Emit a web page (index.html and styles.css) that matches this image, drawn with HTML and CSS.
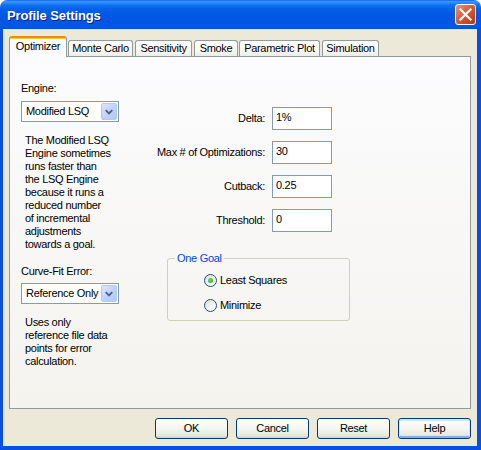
FILE: index.html
```html
<!DOCTYPE html>
<html>
<head>
<meta charset="utf-8">
<link rel="stylesheet" href="styles.css">
</head>
<body>
<div class="window">
  <div class="titlebar">
    <span class="title">Profile Settings</span>
    <span class="close"><svg width="19" height="19" viewBox="0 0 19 19"><path d="M4.5 4.5 L14.5 14.5 M14.5 4.5 L4.5 14.5" stroke="#fff" stroke-width="2.2" stroke-linecap="square" fill="none"/></svg></span>
  </div>
  <div class="frame">
    <div class="tabs">
      <div class="tab active">Optimizer</div>
      <div class="tab">Monte Carlo</div>
      <div class="tab">Sensitivity</div>
      <div class="tab">Smoke</div>
      <div class="tab">Parametric Plot</div>
      <div class="tab">Simulation</div>
    </div>
    <div class="panel">
      <div class="left">
        <div class="lbl">Engine:</div>
        <div class="select"><span>Modified LSQ</span><span class="arrow"><svg width="15" height="15" viewBox="0 0 15 15"><path d="M4 6 L7.5 9.5 L11 6" stroke="#4D6185" stroke-width="2" fill="none"/></svg></span></div>
        <p class="desc">The Modified LSQ<br>Engine sometimes<br>runs faster than<br>the LSQ Engine<br>because it runs a<br>reduced number<br>of incremental<br>adjustments<br>towards a goal.</p>
        <div class="lbl lbl2">Curve-Fit Error:</div>
        <div class="select select2"><span>Reference Only</span><span class="arrow"><svg width="15" height="15" viewBox="0 0 15 15"><path d="M4 6 L7.5 9.5 L11 6" stroke="#4D6185" stroke-width="2" fill="none"/></svg></span></div>
        <p class="desc">Uses only<br>reference file data<br>points for error<br>calculation.</p>
      </div>
      <div class="right">
        <div class="fields">
          <span class="flabel">Delta:</span><div class="input">1%</div>
          <span class="flabel">Max # of Optimizations:</span><div class="input">30</div>
          <span class="flabel">Cutback:</span><div class="input">0.25</div>
          <span class="flabel">Threshold:</span><div class="input">0</div>
        </div>
        <fieldset class="group">
          <legend>One Goal</legend>
          <div class="radios">
            <div class="radio checked"><span class="dot"></span>Least Squares</div>
            <div class="radio"><span class="dot"></span>Minimize</div>
          </div>
        </fieldset>
      </div>
    </div>
    <div class="buttons">
      <button class="btn">OK</button>
      <button class="btn">Cancel</button>
      <button class="btn">Reset</button>
      <button class="btn focus">Help</button>
    </div>
  </div>
</div>
</body>
</html>
```
FILE: styles.css
```css
* { box-sizing: border-box; }
body {
  margin: 0;
  background: #fff;
  font: 11px/13px "Liberation Sans", Arial, sans-serif;
  letter-spacing: -0.3px;
  color: #000;
}
.window {
  width: 481px;
  height: 450px;
  display: flex;
  flex-direction: column;
}
.titlebar {
  height: 29px;
  flex: none;
  display: flex;
  align-items: center;
  justify-content: space-between;
  padding: 0 5px 0 7px;
  border-radius: 7px 7px 0 0;
  background: linear-gradient(to bottom, #0A5FEA 0%, #3D95FF 5%, #2A89FB 10%, #0F70F0 18%, #0562E8 30%, #0058E4 50%, #0055E3 80%, #0057EA 92%, #004ED6 100%);
}
.title {
  color: #fff;
  font: bold 13px/16px "Liberation Sans", Arial, sans-serif;
  letter-spacing: -0.1px;
  text-shadow: 1px 1px 0 #0F1F8A;
  padding-top: 2px;
}
.close {
  width: 21px;
  height: 21px;
  border: 1px solid #fff;
  border-radius: 3px;
  background: linear-gradient(135deg, #E9957A 0%, #DB6240 40%, #C94420 75%, #B93A18 100%);
  display: flex;
  align-items: center;
  justify-content: center;
}
.frame {
  flex: 1;
  display: flex;
  flex-direction: column;
  background: #ECE9D8;
  border-style: solid;
  border-color: #0A4FE0;
  border-width: 0 4px 4px 3px;
  padding: 7px 6px 7px 6px;
}
.tabs {
  display: flex;
  align-items: flex-end;
  height: 20px;
  flex: none;
  position: relative;
  z-index: 1;
}
.tab {
  height: 16px;
  border: 1px solid #919B9C;
  border-bottom: none;
  border-radius: 3px 3px 0 0;
  background: linear-gradient(#FFFFFF, #FAFAF8 60%, #EDECE7);
  display: flex;
  align-items: center;
  justify-content: center;
  margin-right: 2px;
  white-space: nowrap;
}
.tab:nth-child(1) { width: 58px; margin-right: 1px; }
.tab:nth-child(2) { width: 65px; }
.tab:nth-child(3) { width: 57px; }
.tab:nth-child(4) { width: 44px; margin-right: 1px; }
.tab:nth-child(5) { width: 81px; }
.tab:nth-child(6) { width: 57px; }
.tab.active {
  height: 21px;
  margin-bottom: -1px;
  background: #FCFCFE;
  border-top: 2px solid #E68B2C;
  box-shadow: inset 0 1px 0 #FFC83C;
  padding-bottom: 3px;
}
.panel {
  height: 353px;
  flex: none;
  border: 1px solid #919B9C;
  background: linear-gradient(#FCFCFE, #F4F3EE);
  display: flex;
  padding: 25px 0 0 11px;
}
.left {
  width: 100px;
  flex: none;
}
.lbl { height: 13px; white-space: nowrap; }
.lbl2 { margin-top: 14px; }
.select {
  margin-top: 6px;
  height: 21px;
  width: 98px;
  border: 1px solid #7F9DB9;
  background: #fff;
  display: flex;
  align-items: center;
  justify-content: space-between;
  padding: 1px 1px 1px 4px;
  white-space: nowrap;
}
.select2 { margin-top: 5px; }
.arrow {
  width: 16px;
  height: 17px;
  border: 1px solid #B6C9F4;
  border-radius: 2px;
  background: linear-gradient(135deg, #DCE6FD, #C1D3FB 50%, #B3C8F8);
  display: flex;
  align-items: center;
  justify-content: center;
}
.desc {
  margin: 12px 0 0;
  padding-left: 4px;
  white-space: nowrap;
}
.right { flex: 1; }
.fields {
  display: grid;
  grid-template-columns: 144px 60px;
  column-gap: 7px;
  row-gap: 11px;
  margin-top: 25px;
  align-items: center;
}
.flabel { text-align: right; white-space: nowrap; }
.input {
  height: 23px;
  border: 1px solid #7F9DB9;
  background: #fff;
  padding: 3px 3px;
}
.group {
  margin: 20px 0 0 46px;
  width: 183px;
  border: 1px solid #D0D0BF;
  border-radius: 3px;
  padding: 0 0 8px 0;
  min-width: 0;
}
.group legend {
  color: #0046D5;
  padding: 0 2px;
  margin-left: 7px;
  line-height: 13px;
}
.radios {
  padding: 9px 0 0 36px;
  display: flex;
  flex-direction: column;
  gap: 12px;
}
.radio {
  display: flex;
  align-items: center;
  gap: 3px;
  height: 13px;
}
.dot {
  width: 13px;
  height: 13px;
  border-radius: 50%;
  border: 1px solid #1C5180;
  background: linear-gradient(135deg, #DCDCD5, #FFFFFF 80%);
  display: flex;
  align-items: center;
  justify-content: center;
}
.radio.checked .dot::after {
  content: "";
  width: 5px;
  height: 5px;
  border-radius: 50%;
  background: radial-gradient(circle at 40% 40%, #6EE24A, #21A121);
}
.buttons {
  display: flex;
  justify-content: flex-end;
  gap: 8px;
  margin-top: 9px;
}
.btn {
  width: 73px;
  height: 21px;
  border: 1px solid #003C74;
  border-radius: 3px;
  background: linear-gradient(#FFFFFF, #F5F5F1 50%, #EAE8E0 85%, #D6D0C5);
  font: inherit;
  letter-spacing: inherit;
  color: #000;
  padding: 0;
}
.btn.focus {
  box-shadow: inset 0 1px 0 1px #CEE7FF, inset 0 -1px 0 1px #8CA9EE;
}
```
